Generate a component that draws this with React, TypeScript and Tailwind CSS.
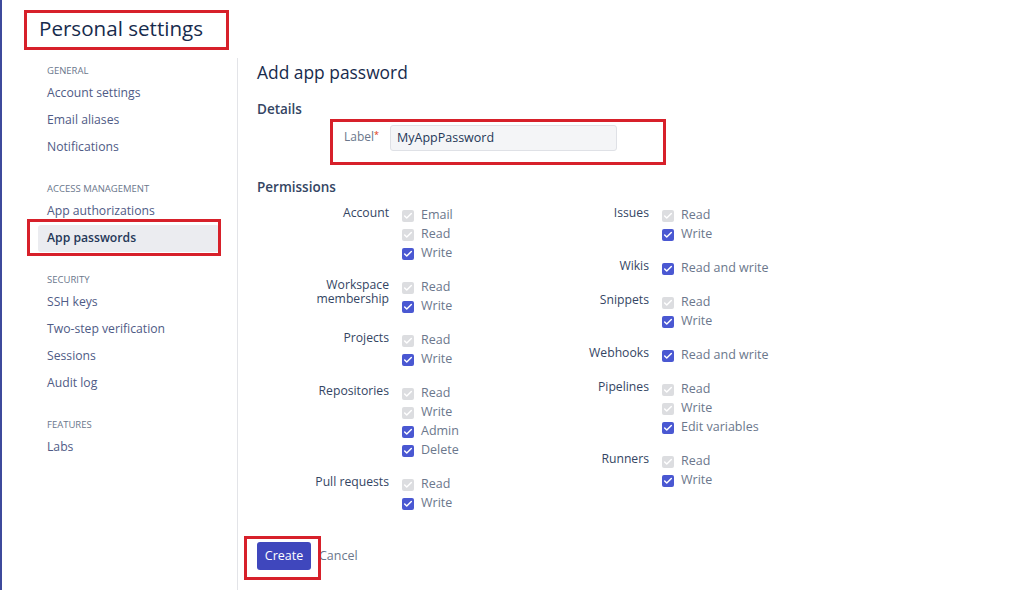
import { Check } from "lucide-react";

type Opt = { label: string; on: boolean };
type Group = { name: string[]; opts: Opt[] };

const sidebar = [
  { title: "General", items: ["Account settings", "Email aliases", "Notifications"] },
  { title: "Access management", items: ["App authorizations", "App passwords"] },
  { title: "Security", items: ["SSH keys", "Two-step verification", "Sessions", "Audit log"] },
  { title: "Features", items: ["Labs"] },
];

const left: Group[] = [
  { name: ["Account"], opts: [{ label: "Email", on: false }, { label: "Read", on: false }, { label: "Write", on: true }] },
  { name: ["Workspace", "membership"], opts: [{ label: "Read", on: false }, { label: "Write", on: true }] },
  { name: ["Projects"], opts: [{ label: "Read", on: false }, { label: "Write", on: true }] },
  {
    name: ["Repositories"],
    opts: [
      { label: "Read", on: false },
      { label: "Write", on: false },
      { label: "Admin", on: true },
      { label: "Delete", on: true },
    ],
  },
  { name: ["Pull requests"], opts: [{ label: "Read", on: false }, { label: "Write", on: true }] },
];

const right: Group[] = [
  { name: ["Issues"], opts: [{ label: "Read", on: false }, { label: "Write", on: true }] },
  { name: ["Wikis"], opts: [{ label: "Read and write", on: true }] },
  { name: ["Snippets"], opts: [{ label: "Read", on: false }, { label: "Write", on: true }] },
  { name: ["Webhooks"], opts: [{ label: "Read and write", on: true }] },
  {
    name: ["Pipelines"],
    opts: [
      { label: "Read", on: false },
      { label: "Write", on: false },
      { label: "Edit variables", on: true },
    ],
  },
  { name: ["Runners"], opts: [{ label: "Read", on: false }, { label: "Write", on: true }] },
];

function Box({ on }: { on: boolean }) {
  return (
    <span
      className={
        on
          ? "flex h-[12px] w-[12px] items-center justify-center rounded-[2px] bg-[#4a58d2]"
          : "flex h-[12px] w-[12px] items-center justify-center rounded-[2px] bg-[#dcdde0]"
      }
    >
      <Check size={10} strokeWidth={3.5} className="text-white" />
    </span>
  );
}

function Column({ groups }: { groups: Group[] }) {
  return (
    <div className="flex w-[260px] flex-col gap-[15px]">
      {groups.map((g) => (
        <div key={g.name.join(" ")} className="flex">
          <div className="w-[132px] text-right text-[12.2px] leading-[14px] font-medium text-[#344563]">
            {g.name.map((n) => (
              <div key={n}>{n}</div>
            ))}
          </div>
          <div className="ml-[13px] flex flex-col">
            {g.opts.map((o) => (
              <label key={o.label} className="flex h-[19px] items-center gap-[7px] text-[12.5px] text-[#6b778c]">
                <Box on={o.on} />
                <span>{o.label}</span>
              </label>
            ))}
          </div>
        </div>
      ))}
    </div>
  );
}

export default function App() {
  return (
    <div
      className="h-[590px] w-[1024px] overflow-hidden border-l-2 border-[#3d4a9c] bg-white"
      style={{ fontFamily: '"Open Sans", "Noto Sans", sans-serif' }}
    >
      <div className="pl-[22px] pt-[10px]">
        <div className="flex h-[40px] w-[205px] items-center border-[3px] border-[#d7202a] pb-[3px] pl-[12px] text-[20.6px] text-[#172b4d]">
          Personal settings
        </div>
      </div>

      <div className="mt-[8px] flex">
        <nav className="w-[236px] shrink-0 border-r border-[#e3e4e8] pb-[200px]">
          {sidebar.map((s, i) => (
            <div key={s.title} className={i === 0 ? "mt-[5px]" : "mt-[20px]"}>
              <div className="flex h-[17px] items-center pl-[45px] text-[9.5px] uppercase text-[#6b778c]">{s.title}</div>
              {s.items.map((it) =>
                it === "App passwords" ? (
                  <div key={it} className="relative ml-[36px] mr-[18px] flex h-[27px] items-center rounded-[3px] bg-[#ebecf0] pl-[9px] text-[12.2px] font-semibold text-[#253858]">
                    {it}
                    <div className="absolute -bottom-[4px] -left-[11px] -right-[2px] -top-[6px] border-[3px] border-[#d7202a]" />
                  </div>
                ) : (
                  <div key={it} className="flex h-[27px] items-center pl-[45px] text-[12.2px] text-[#4f5b86]">
                    {it}
                  </div>
                )
              )}
            </div>
          ))}
        </nav>

        <main className="flex-1 pl-[19px] pt-[2px]">
          <h1 className="text-[17.4px] leading-[24px] text-[#172b4d]">Add app password</h1>
          <h2 className="mt-[15px] text-[13.5px] leading-[20px] font-semibold text-[#344563]">Details</h2>

          <div className="ml-[73px] flex h-[46px] w-[336px] items-start border-[3px] border-[#d7202a] pl-[11px] pt-[3px]">
            <span className="mt-[3px] text-[12px] text-[#6b778c]">
              Label<span className="align-top text-[9px] text-[#de350b]">*</span>
            </span>
            <div className="ml-[11px] flex h-[26px] w-[227px] items-center rounded-[3px] border border-[#dfe1e6] bg-[#f4f5f7] pl-[6px] text-[12.5px] text-[#253858]">
              MyAppPassword
            </div>
          </div>

          <h2 className="mt-[12px] text-[13.5px] leading-[20px] font-semibold text-[#344563]">Permissions</h2>

          <div className="mt-[9px] flex">
            <Column groups={left} />
            <Column groups={right} />
          </div>

          <div className="mt-[29px] flex items-center">
            <div className="relative">
              <button className="h-[28px] w-[54px] rounded-[3px] bg-[#3f47bd] text-[12.5px] text-white">Create</button>
              <div className="absolute -bottom-[10px] -left-[13px] -right-[10px] -top-[6px] border-[3px] border-[#d7202a]" />
            </div>
            <span className="ml-[8px] text-[12.5px] text-[#6b778c]">Cancel</span>
          </div>
        </main>
      </div>
    </div>
  );
}
